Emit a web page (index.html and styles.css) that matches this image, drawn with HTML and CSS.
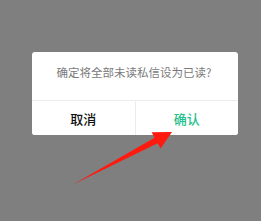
FILE: index.html
```html
<!DOCTYPE html>
<html>
<head>
    <meta charset="utf-8">
    <title>设为已读</title>
    <link rel="stylesheet" href="styles.css">
</head>
<body>
    <div class="dialog">
        <p class="dialog-msg">确定将全部未读私信设为已读?</p>
        <div class="dialog-btns">
            <button class="btn btn-cancel">取消</button>
            <button class="btn btn-ok">确认</button>
        </div>
    </div>

    <!-- red arrow pointing at confirm -->
    <svg class="arrow" width="261" height="221" viewBox="0 0 261 221">
        <polygon points="73,184.5 154.6,137.8 151.6,132.2 172,132 160.6,148.6 157.6,143.2" fill="#ff1a0f"/>
    </svg>
</body>
</html>
```

FILE: styles.css
```css
body {
    margin: 0;
    width: 261px;
    height: 221px;
    background-color: #7f7f7f;
    font-family: "Noto Sans CJK SC", "Noto Sans", sans-serif;
    overflow: hidden;
    position: relative;
    padding-top: 52px;
    box-sizing: border-box;
}

.dialog {
    margin-left: 32px;
    width: 206px;
    background-color: white;
    border-radius: 3px;
    overflow: hidden;
}

.dialog-msg {
    margin: 0;
    height: 49px;
    box-sizing: border-box;
    padding-top: 12px;
    padding-right: 2px;
    text-align: center;
    font-size: 11.5px;
    line-height: 17px;
    color: #7a7a7a;
    border-bottom: 1px solid #ececec;
}

.dialog-btns {
    display: flex;
    height: 34px;
}

.btn {
    flex: 1;
    border: 0;
    margin: 0;
    padding: 0;
    background: white;
    font-family: inherit;
    font-size: 13px;
    font-weight: 500;
    color: #111;
}

.btn-cancel {
    border-right: 1px solid #ececec;
}

.btn-ok {
    color: #22c08a;
}

.arrow {
    position: absolute;
    left: 0;
    top: 0;
}
```
